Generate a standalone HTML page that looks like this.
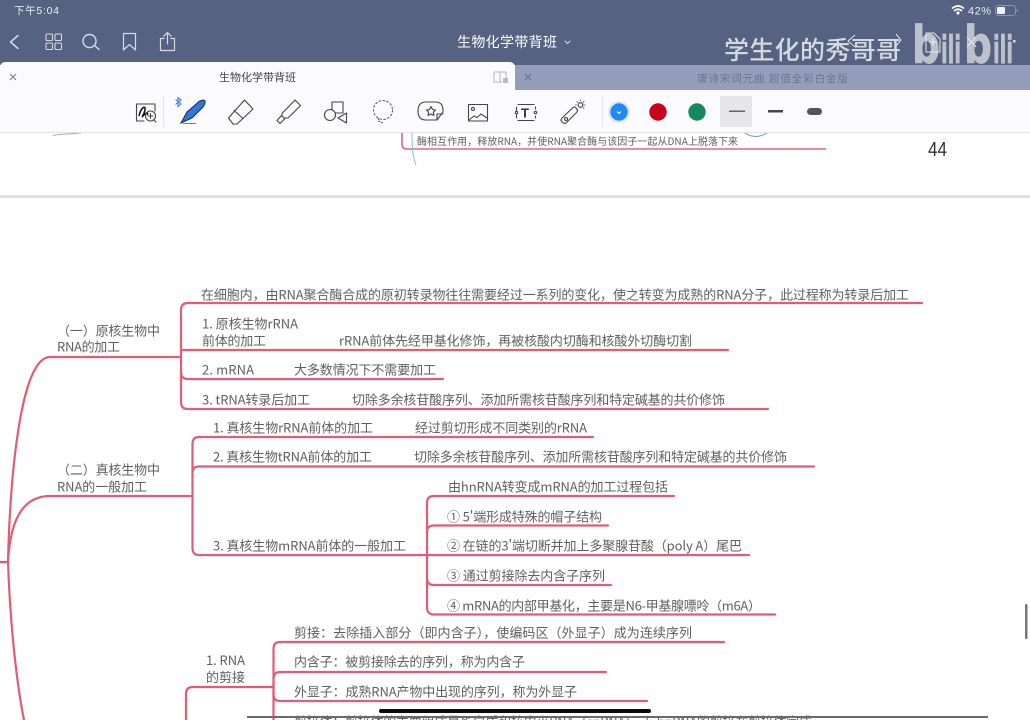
<!DOCTYPE html>
<html lang="zh"><head><meta charset="utf-8"><title>生物化学带背班</title>
<style>
html,body{margin:0;padding:0;width:1030px;height:720px;overflow:hidden;background:#fff}
svg{display:block;position:absolute;left:0;top:0}
.t{font-family:"Noto Sans CJK SC","Liberation Sans",sans-serif;font-size:13px;fill:#5f5f5f}
.l{fill:none;stroke:#e15c74;stroke-width:2.200;stroke-linecap:round;stroke-linejoin:round}
.i{fill:none;stroke:#444;stroke-width:1.100;stroke-linejoin:round;stroke-linecap:round}
.h{fill:none;stroke:#d5d9e2;stroke-width:1.400;stroke-linecap:round;stroke-linejoin:round}
.c{font-family:"Liberation Sans","Noto Sans CJK SC",sans-serif}
.bl{font-family:"DejaVu Sans",sans-serif;font-weight:700;fill:#bcc1cb;stroke:#bcc1cb;stroke-width:.8px}
</style></head><body>
<svg width="1030" height="720" viewBox="0 0 1030 720" xmlns="http://www.w3.org/2000/svg">
<defs><filter id="b" x="-2%" y="-2%" width="104%" height="104%"><feGaussianBlur stdDeviation="0.35"/></filter></defs>

<!-- document -->
<rect x="0" y="130" width="1030" height="65" fill="#fff"/>
<rect x="0" y="195" width="1030" height="3" fill="#e0e0e1"/>
<g filter="url(#b)">
<path d="M53 135.500C62 133 72 135 85 132" fill="none" stroke="#aaa" stroke-width="1"/>
<path d="M402 130V144Q402 149 407 149H826" fill="none" stroke="#dc6a7f" stroke-width="1.600"/>
<path d="M412 128C412 145 412 155 416 165" fill="none" stroke="#8fb8cf" stroke-width="1"/>
<path d="M742 131Q755 142 770 131" fill="none" stroke="#6f9fc6" stroke-width="1"/>
<text class="t" x="417" y="145" style="font-size:10px" textLength="321">酶相互作用，释放RNA，并使RNA聚合酶与该因子一起从DNA上脱落下来</text>
<text x="928" y="156" textLength="19" lengthAdjust="spacingAndGlyphs" style="font-family:'Liberation Sans',sans-serif;font-size:20px;fill:#333">44</text>

<!-- mind map lines -->
<path class="l" d="M0 562H8C10 480 20 357 50 357H181"/>
<path class="l" d="M8 562C10 525 20 496 50 496H192"/>
<path class="l" d="M8 562C10 620 16 680 24 720"/>
<path class="l" d="M181 357V310Q181 303 188 303H922"/>
<path class="l" d="M181 350H728"/>
<path class="l" d="M181 357V372Q181 379 188 379H443"/>
<path class="l" d="M181 372V402Q181 409 188 409H768"/>
<path class="l" d="M192.500 496V444Q192.500 437 199 437H593"/>
<path class="l" d="M192.500 473Q192.500 466.500 199 466.500H814"/>
<path class="l" d="M192.500 496V548Q192.500 555 199 555H427"/>
<path class="l" d="M427 555V503Q427 496 434 496H674"/>
<path class="l" d="M427 532Q427 525.500 434 525.500H608"/>
<path class="l" d="M427 555H749"/>
<path class="l" d="M427 555V578Q427 585 434 585H611"/>
<path class="l" d="M427 578V607Q427 614.500 434 614.500H775"/>
<path class="l" d="M186 720V694Q186 687 193 687H273"/>
<path class="l" d="M273.500 720V649Q273.500 642 280 642H724"/>
<path class="l" d="M273.500 679Q273.500 672 280 672H606"/>
<path class="l" d="M273.500 680V694Q273.500 701 280 701H647"/>

<!-- mind map text -->
<text class="t" x="201" y="299.500" textLength="708">在细胞内，由RNA聚合酶合成的原初转录物往往需要经过一系列的变化，使之转变为成熟的RNA分子，此过程称为转录后加工</text>
<text class="t" x="202" y="328.500" textLength="96">1. 原核生物rRNA</text>
<text class="t" x="202" y="345.500" textLength="64">前体的加工</text>
<text class="t" x="339" y="345.500" textLength="353">rRNA前体先经甲基化修饰，再被核酸内切酶和核酸外切酶切割</text>
<text class="t" x="202" y="374.500" textLength="52">2. mRNA</text>
<text class="t" x="294" y="374.500" textLength="142">大多数情况下不需要加工</text>
<text class="t" x="202" y="404.500" textLength="108">3. tRNA转录后加工</text>
<text class="t" x="352" y="404.500" textLength="373">切除多余核苷酸序列、添加所需核苷酸序列和特定碱基的共价修饰</text>
<text class="t" x="213" y="432.500" textLength="160">1. 真核生物rRNA前体的加工</text>
<text class="t" x="415" y="432.500" textLength="172">经过剪切形成不同类别的rRNA</text>
<text class="t" x="213" y="461.500" textLength="159">2. 真核生物tRNA前体的加工</text>
<text class="t" x="414" y="461.500" textLength="373">切除多余核苷酸序列、添加所需核苷酸序列和特定碱基的共价修饰</text>
<text class="t" x="213" y="550.500" textLength="193">3. 真核生物mRNA前体的一般加工</text>
<text class="t" x="448" y="491.500" textLength="220">由hnRNA转变成mRNA的加工过程包括</text>
<text class="t" x="447" y="521.500" textLength="155">① 5'端形成特殊的帽子结构</text>
<text class="t" x="447" y="550.500" textLength="295">② 在链的3'端切断并加上多聚腺苷酸（poly A）尾巴</text>
<text class="t" x="447" y="580.500" textLength="158">③ 通过剪接除去内含子序列</text>
<text class="t" x="447" y="610.500" textLength="314">④ mRNA的内部甲基化，主要是N6-甲基腺嘌呤（m6A）</text>
<text class="t" x="57" y="335.500" textLength="103">（一）原核生物中</text>
<text class="t" x="57" y="351.500" textLength="63">RNA的加工</text>
<text class="t" x="57" y="474.500" textLength="103">（二）真核生物中</text>
<text class="t" x="57" y="491.500" textLength="90">RNA的一般加工</text>
<text class="t" x="206" y="665" textLength="39">1. RNA</text>
<text class="t" x="206" y="682" textLength="39">的剪接</text>
<text class="t" x="294" y="637.500" textLength="398">剪接：去除插入部分（即内含子），使编码区（外显子）成为连续序列</text>
<text class="t" x="294" y="666.500" textLength="231">内含子：被剪接除去的序列，称为内含子</text>
<text class="t" x="294" y="696.500" textLength="283">外显子：成熟RNA产物中出现的序列，称为外显子</text>
<text class="t" x="294" y="726.500" textLength="518">剪接体：剪接体的主要组成是蛋白质和核内小RNA（snRNA），与hnRNA的剪接在剪接体完成</text>
</g>
<rect x="247" y="716" width="741" height="2" fill="#6a6a6a"/>
<rect x="379" y="709" width="272" height="4" rx="2" fill="#0a0a0a"/>
<rect x="1025" y="604" width="2.500" height="35" rx="1" fill="#777"/>

<!-- top bar -->
<rect x="0" y="0" width="1030" height="65" fill="#566282"/>
<g filter="url(#b)">
<text x="14" y="14" class="c" style="font-size:10.500px;fill:#eef0f4" textLength="45">下午5:04</text>
<path class="h" style="stroke-width:1.500" d="M18 35.500L10.500 42L18 48.500"/>
<g class="h" style="stroke-width:1.100">
<rect x="46" y="34" width="6.500" height="6.500" rx="1"/><rect x="55" y="34" width="6.500" height="6.500" rx="1"/><rect x="46" y="43" width="6.500" height="6.500" rx="1"/><rect x="55" y="43" width="6.500" height="6.500" rx="1"/>
</g>
<circle class="h" cx="89.500" cy="41" r="6.500"/><path class="h" d="M94.500 45.500L99 49.500"/>
<path class="h" style="stroke-width:1.200" d="M123.500 33.500H135.500V50L129.500 44.500L123.500 50Z"/>
<path class="h" style="stroke-width:1.200" d="M164 38.500H160.500V50.500H174.500V38.500H171M167.500 44V33M163.800 36.200L167.500 32.500L171.200 36.200"/>
<text x="457" y="47" class="c" style="font-size:14px;fill:#fff;font-family:'Noto Sans CJK SC',sans-serif" textLength="100">生物化学带背班</text>
<path class="h" style="stroke-width:1" d="M565 41L567.500 43.500L570 41"/>
<path d="M952 8.500Q958 3.500 964 8.500M954 11Q958 7.500 962 11" fill="none" stroke="#fff" stroke-width="1.600"/><path d="M956 13L958 11L960 13L958 15Z" fill="#fff"/>
<text x="968" y="14.500" class="c" style="font-size:11px;fill:#e6e9ef" textLength="23">42%</text>
<rect x="995.500" y="5.500" width="20" height="10" rx="2.500" fill="none" stroke="#8b94aa" stroke-width="1"/><rect x="997" y="7" width="8" height="7" rx="1" fill="#f3f4f7"/><rect x="1016.500" y="9" width="1" height="3" fill="#8b94aa"/>

<!-- watermark -->
<text x="724" y="59" style="font-family:'Noto Sans CJK SC',sans-serif;font-size:25px;fill:#d5d9e0;font-weight:500" textLength="177">学生化的秀哥哥</text>
<text class="bl" x="912" y="63" style="font-size:52px" textLength="28" lengthAdjust="spacingAndGlyphs">b</text>
<text class="bl" x="941" y="63" style="font-size:38px" textLength="20" lengthAdjust="spacingAndGlyphs">ili</text>
<text class="bl" x="964" y="63" style="font-size:52px" textLength="28" lengthAdjust="spacingAndGlyphs">b</text>
<text class="bl" x="993" y="63" style="font-size:38px" textLength="20" lengthAdjust="spacingAndGlyphs">ili</text>
<rect x="1013" y="40" width="2.500" height="2.500" fill="#d5d9e0"/>
<path d="M855 35L848 41L855 47" fill="none" stroke="#dfe2e8" stroke-width="1"/><path d="M896 34L901 40L896 46" fill="none" stroke="#dfe2e8" stroke-width="1"/>
<path d="M926 33H934L940 39V52H926Z" fill="none" stroke="#e6e8ec" stroke-width="1"/><path d="M929 42H937M933 38V46" stroke="#e6e8ec" stroke-width="1.200"/>
<path d="M967 37L976 47M976 37L967 47" stroke="#e6e8ec" stroke-width="1"/>
</g>

<!-- tabs -->
<rect x="515" y="65" width="515" height="26" fill="#949db9"/>
<path d="M0 90V68Q0 62 6 62H509Q515 62 515 68V90Z" fill="#fbfbfd"/>
<rect x="0" y="90" width="1030" height="42" fill="#fbfbfd"/>
<rect x="0" y="132" width="1030" height="1" fill="#e4e4e6"/>
<g filter="url(#b)">
<path d="M10 74L16 80M16 74L10 80" stroke="#777" stroke-width="1"/>
<text x="219" y="81" style="font-family:'Noto Sans CJK SC',sans-serif;font-size:11px;fill:#444" textLength="77">生物化学带背班</text>
<path d="M494 72H506V80M494 72V82H502M500 72V82" fill="none" stroke="#b5b5b8" stroke-width="1"/><rect x="503" y="78" width="5" height="5" fill="#bbb"/>
<path d="M525 74L531 80M531 74L525 80" stroke="#666f8c" stroke-width="1"/>
<text x="697" y="82" style="font-family:'Noto Sans CJK SC',sans-serif;font-size:10.500px;fill:#6c7591" textLength="151">唐诗宋词元曲 超值全彩白金版</text>

<!-- toolbar -->
<rect x="163" y="96" width="1" height="31" fill="#e4e4e6"/>
<rect x="602" y="96" width="1" height="31" fill="#e8e8ea"/>
<!-- ink zoom -->
<path class="i" d="M144 121H136.500V104H155V111"/>
<path d="M139 116C141 107 146 105 145 110C144 115 141 118 143 116C146 113 148 111 147.500 115" fill="none" stroke="#111" stroke-width="1.500"/>
<circle class="i" cx="150.500" cy="116" r="5"/><path class="i" d="M148 116H153M150.500 113.500V118.500M154 120L156 122"/>
<!-- bluetooth -->
<path d="M175.500 99.500L181 104L178 106.500V97.500L181 100L175.500 104.500" fill="none" stroke="#3b7fd6" stroke-width="1.100"/>
<!-- pen -->
<path d="M181 123L187 112L199 101.500Q204 99 205 101Q205.500 104 203 107L192 118Z" fill="#2f78d6" stroke="#1d2c44" stroke-width="1"/>
<path d="M183 123.500H196" stroke="#3f86dc" stroke-width="1"/>
<!-- eraser -->
<path class="i" d="M244.500 100L253 109L237 124H233L228.500 118ZM234 110.500L243 118.500"/>
<!-- highlighter -->
<path class="i" d="M295 100L300.500 105.500L288 118H284L282 116V113.500ZM282 115L277 120.500L280 123.500L285.500 118"/>
<!-- shapes -->
<rect class="i" x="332" y="102" width="11" height="11"/>
<circle cx="330" cy="115" r="5.500" fill="#fbfbfd" stroke="#444" stroke-width="1.100"/>
<path class="i" style="fill:#fbfbfd" d="M346.500 113V123L338 118Z"/>
<!-- lasso -->
<circle cx="383" cy="110" r="9.500" fill="none" stroke="#555" stroke-width="1" stroke-dasharray="2.500 1.500"/>
<path d="M378 118Q379 120 378.500 121L383 123" fill="none" stroke="#555" stroke-width="1" stroke-dasharray="2 1"/>
<!-- sticker -->
<path class="i" d="M426 102H435Q443 102 443 110V112L437 120H426Q418 120 418 111Q418 102 426 102ZM437 120V114H443"/>
<path class="i" d="M431 106.500L432.500 109.500L435.500 110L433.300 112.200L434 115.500L431 114L428 115.500L428.700 112.200L426.500 110L429.500 109.500Z"/>
<!-- image -->
<rect class="i" x="468.500" y="104.500" width="19" height="16.500"/><circle class="i" cx="473" cy="109" r="1.500"/><path class="i" d="M469 120L474 116L477 117.500L481 114L487 118"/>
<!-- text -->
<path class="i" d="M518 104.500H534M518 120.500H534M516.500 107V111M516.500 114V118M535.500 107V109M535.500 116V118"/>
<circle class="i" cx="516.500" cy="112.500" r="1.200"/><circle class="i" cx="535.500" cy="112.500" r="1.200"/>
<text x="521" y="117.500" class="c" style="font-size:13px;font-weight:700;fill:#333">T</text>
<!-- magic -->
<path class="i" d="M562 118L573 107.500Q575 106.500 576 108L577.500 110Q577.500 111.500 576.500 112.500L566 123Q564 124 562.500 122.500L561 120.500Q561 119 562 118Z"/>
<circle class="i" cx="566" cy="119" r="1.500"/>
<circle class="i" cx="580.500" cy="105" r="2.300"/>
<path class="i" style="stroke:#777" d="M580.500 100V101M585 105H584M577 101.500L577.800 102.300M584 101.500L583.200 102.300M584 108.500L583.200 107.700M575.500 105H576.500"/>
<!-- colours -->
<circle cx="619" cy="112" r="11" fill="#dfe3ea"/>
<circle cx="619" cy="112" r="8.700" fill="#2089f0"/>
<path d="M617 111.500L619 113.500L621 111.500" fill="none" stroke="#fff" stroke-width="1"/>
<circle cx="658" cy="112" r="8.700" fill="#c9001a"/>
<circle cx="697" cy="112" r="8.700" fill="#12885f"/>
<rect x="720" y="96" width="32" height="31" rx="1" fill="#e7e7e9"/>
<rect x="729" y="110.500" width="16" height="1.500" fill="#666"/>
<rect x="768" y="110" width="15" height="2.500" fill="#444"/>
<rect x="807" y="108" width="15" height="7" rx="3.500" fill="#555"/>
</g>
</svg>
</body></html>
